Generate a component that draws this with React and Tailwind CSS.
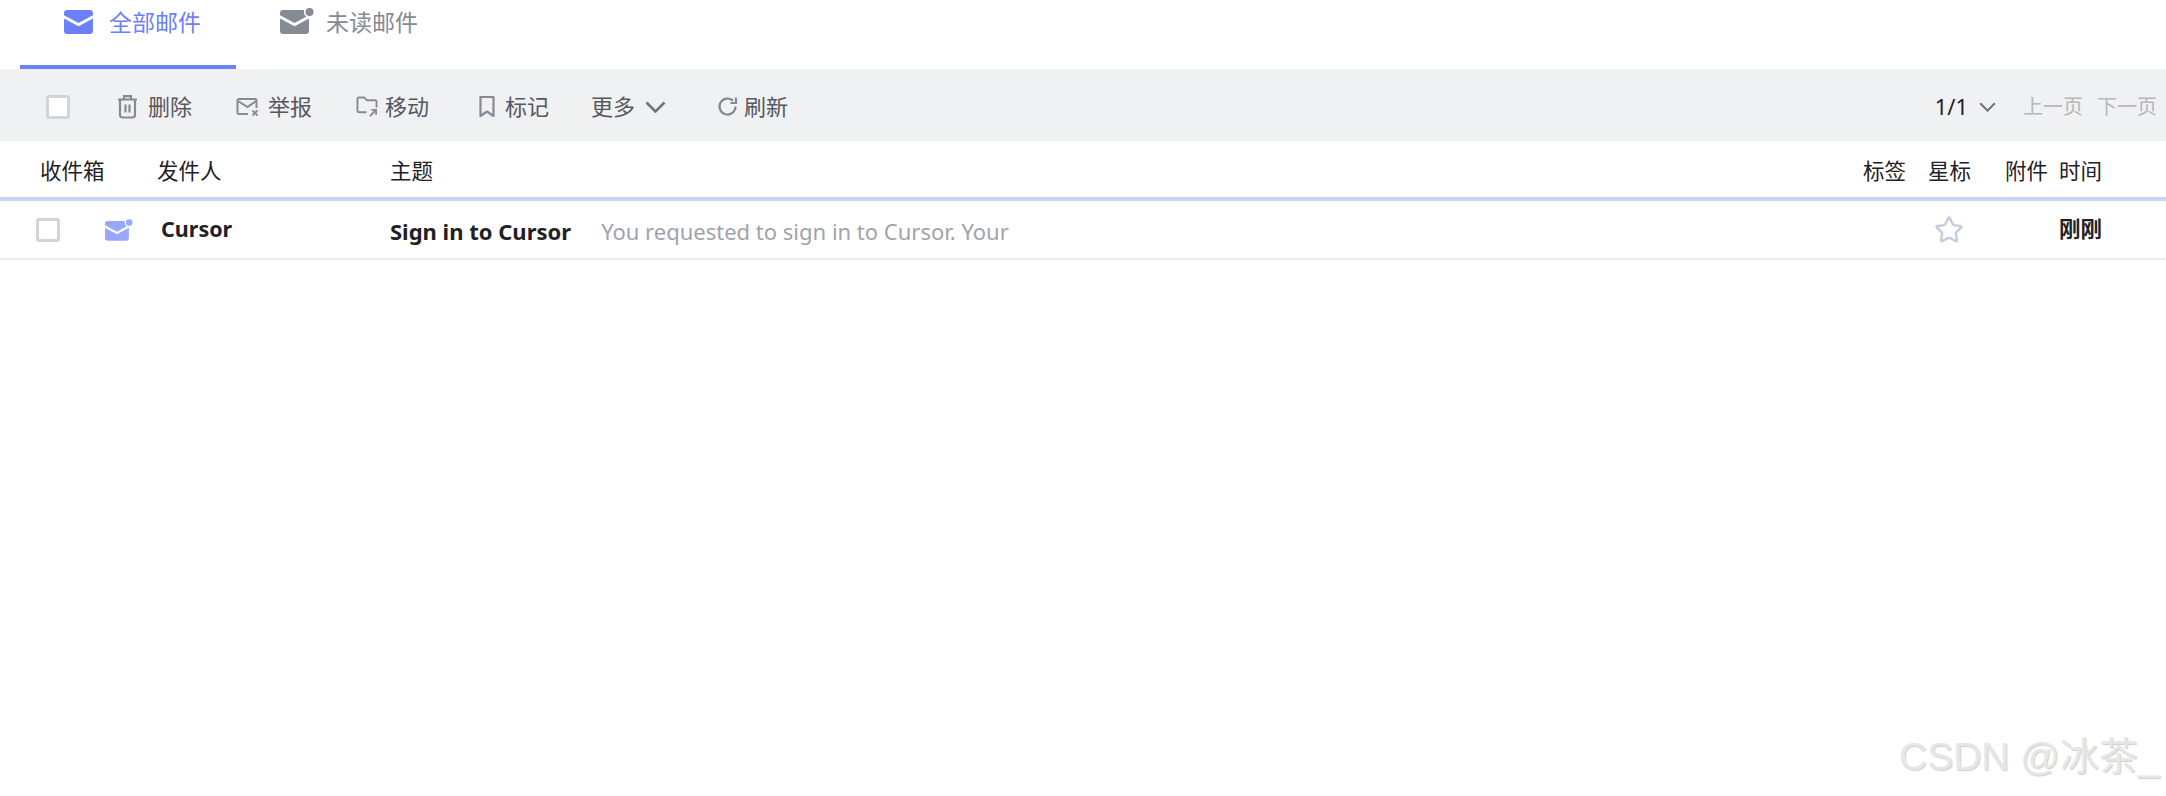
import React from 'react';
import { Star } from 'lucide-react';

function MailIcon({ className, fill }) {
  return (
    <svg className={className} viewBox="0 0 29 24" fill="none">
      <path
        d="M0 3C0 1.3 1.3 0 3 0h23c1.7 0 3 1.3 3 3v2.2L14.5 13 0 5.2V3zM0 8.4l14.5 7.8L29 8.4V21c0 1.7-1.3 3-3 3H3c-1.7 0-3-1.3-3-3V8.4z"
        fill={fill}
      />
    </svg>
  );
}

function UnreadIcon({ className, fill }) {
  return (
    <svg className={className} viewBox="0 0 34 26" fill="none">
      <path
        d="M0 5C0 3.3 1.3 2 3 2h23c1.7 0 3 1.3 3 3v2.2L14.5 15 0 7.2V5zM0 10.4l14.5 7.8L29 10.4V23c0 1.7-1.3 3-3 3H3c-1.7 0-3-1.3-3-3V10.4z"
        fill={fill}
      />
      <circle cx="29.5" cy="4" r="5.6" fill="#fff" />
      <circle cx="29.5" cy="4" r="4" fill={fill} />
    </svg>
  );
}

function TrashIcon() {
  return (
    <svg className="w-[21px] h-[25px]" viewBox="0 0 21 25" fill="none" stroke="#858a94" strokeWidth="2.2">
      <path d="M1 5.5h19M7 5.5V2.2h7v3.3" />
      <path d="M3 5.5V21a2.5 2.5 0 0 0 2.5 2.5h10A2.5 2.5 0 0 0 18 21V5.5" />
      <path d="M8.5 10.5v8M12.5 10.5v8" />
    </svg>
  );
}

function ReportIcon() {
  return (
    <svg className="w-[24px] h-[20px]" viewBox="0 0 24 20" fill="none" stroke="#858a94" strokeWidth="2">
      <path d="M12 17H3a1.5 1.5 0 0 1-1.5-1.5v-12A1.5 1.5 0 0 1 3 2h16a1.5 1.5 0 0 1 1.5 1.5V11" />
      <path d="M2 4l9.5 6L20 4" />
      <path d="M16.5 13.5l5 5M21.5 13.5l-5 5" strokeWidth="1.8" />
    </svg>
  );
}

function MoveIcon() {
  return (
    <svg className="w-[22px] h-[22px]" viewBox="0 0 23 23" fill="none" stroke="#858a94" strokeWidth="2">
      <path d="M11 17H3a1.5 1.5 0 0 1-1.5-1.5V3A1.5 1.5 0 0 1 3 1.5h5.5l3 3H20A1.5 1.5 0 0 1 21.5 6v6" />
      <path d="M14.5 21l6-6M16 14.5h5v5" />
    </svg>
  );
}

function BookmarkIcon() {
  return (
    <svg className="w-[18px] h-[23px]" viewBox="0 0 18 23" fill="none" stroke="#858a94" strokeWidth="2.2">
      <path d="M2.5 2h13v19L9 16.5 2.5 21V2z" strokeLinejoin="round" />
    </svg>
  );
}

function RefreshIcon() {
  return (
    <svg className="w-[21px] h-[21px]" viewBox="0 0 21 21" fill="none" stroke="#858a94" strokeWidth="2.2">
      <path d="M18.5 10.5a8 8 0 1 1-2.6-5.9" />
      <path d="M19 1.5v5.5h-5.5" />
    </svg>
  );
}

function Chevron({ className }) {
  return (
    <svg className={className} viewBox="0 0 21 12" fill="none" stroke="#70747d" strokeWidth="2.6">
      <path d="M1.5 1.5l9 9 9-9" />
    </svg>
  );
}

function ToolItem({ icon, label, className }) {
  return (
    <div className={`flex items-center ${className}`}>
      {icon}
      <span>{label}</span>
    </div>
  );
}

export default function App() {
  return (
    <div className="relative w-full h-[796px] overflow-hidden bg-white font-['Noto_Sans','Noto_Sans_CJK_SC',sans-serif] text-[21.5px] text-[#1f2126]">
      {/* tabs */}
      <div className="flex h-[69px] pl-[20px]">
        <div className="flex w-[216px] h-[69px] pl-[44px] pt-[7px] gap-[16px] border-b-4 border-[#6b80f9] text-[#6b80f9] text-[23px] leading-[30px]">
          <MailIcon className="w-[29px] h-[24px] mt-[3px]" fill="#6b80f9" />
          <span>全部邮件</span>
        </div>
        <div className="flex pl-[44px] pt-[7px] gap-[12px] text-[#858a94] text-[23px] leading-[30px]">
          <UnreadIcon className="w-[34px] h-[26px] mt-[1px]" fill="#858a94" />
          <span>未读邮件</span>
        </div>
      </div>

      {/* toolbar */}
      <div className="flex items-center h-[72px] pl-[46px] pr-[9px] pt-[3px] bg-[#f0f1f3] text-[#55585f] text-[22px]">
        <div className="w-[24px] h-[24px] rounded-[3px] border-[3px] border-[#d3d4da] bg-white" />
        <ToolItem className="ml-[47px] gap-[10px]" icon={<TrashIcon />} label="删除" />
        <ToolItem className="ml-[44px] gap-[8px]" icon={<ReportIcon />} label="举报" />
        <ToolItem className="ml-[44px] gap-[7px]" icon={<MoveIcon />} label="移动" />
        <ToolItem className="ml-[49px] gap-[9px]" icon={<BookmarkIcon />} label="标记" />
        <div className="flex items-center ml-[42px] gap-[10px]">
          <span>更多</span>
          <Chevron className="w-[21px] h-[12px]" />
        </div>
        <ToolItem className="ml-[51px] gap-[6px]" icon={<RefreshIcon />} label="刷新" />
        <div className="flex items-center ml-auto text-[20px]">
          <span className="text-[22px] text-[#1f2126]">1/1</span>
          <Chevron className="w-[17px] h-[10px] ml-[11px]" />
          <span className="ml-[27px] text-[#b5b7bd]">上一页</span>
          <span className="ml-[14px] text-[#b5b7bd]">下一页</span>
        </div>
      </div>

      {/* column header */}
      <div className="flex items-center h-[56px] pl-[40px] pt-[5px]">
        <span className="w-[117px]">收件箱</span>
        <span className="w-[233px]">发件人</span>
        <span className="w-[1473px]">主题</span>
        <span className="w-[65px]">标签</span>
        <span className="w-[77px]">星标</span>
        <span className="w-[54px]">附件</span>
        <span>时间</span>
      </div>
      <div className="h-[4px] bg-[#cbd2fc]" />

      {/* mail row */}
      <div className="flex items-center h-[59px] pl-[36px] pr-[64px] border-b-2 border-[#ececee]">
        <div className="w-[24px] h-[24px] rounded-[3px] border-[3px] border-[#d3d4da] bg-white" />
        <UnreadIcon className="w-[28px] h-[22px] ml-[45px]" fill="#98a6fb" />
        <span className="w-[229px] ml-[28px] text-[21.5px] font-bold">Cursor</span>
        <span className="mt-[3px] text-[22px] font-bold">Sign in to Cursor</span>
        <span className="mt-[3px] ml-[30px] flex-1 text-[22px] text-[#a1a3ac]">You requested to sign in to Cursor. Your</span>
        <Star className="w-[30px] h-[30px] text-[#c3cfdd]" strokeWidth={2} />
        <span className="ml-[95px] font-bold">刚刚</span>
      </div>

      {/* watermark */}
      <div className="absolute left-[1899px] top-[733px] font-['Liberation_Sans','Noto_Sans_CJK_SC',sans-serif] text-[39px] leading-[48px] text-[#e6e6e6] [text-shadow:1px_1px_1px_#cfcfcf] whitespace-nowrap">
        CSDN @冰茶_
      </div>
    </div>
  );
}
